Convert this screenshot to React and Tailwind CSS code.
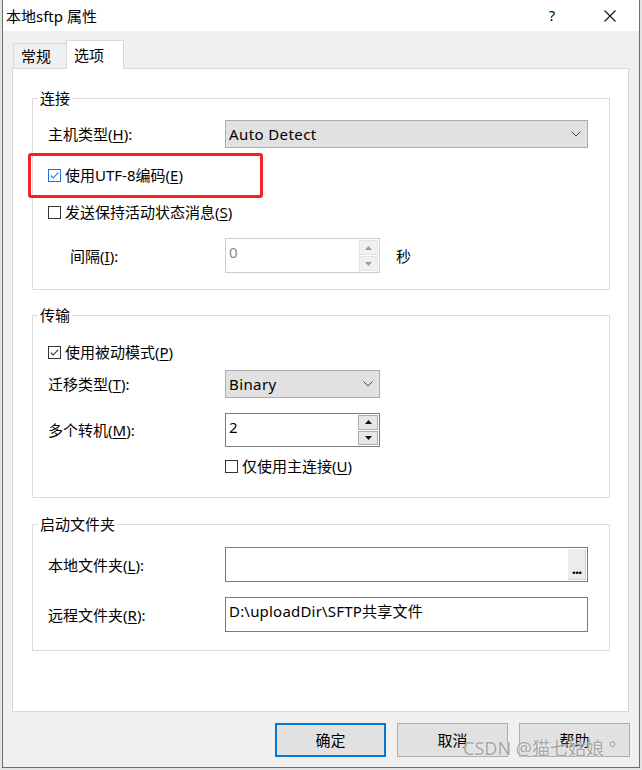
import React from "react";

const FONT = "font-['Noto_Sans','Noto_Sans_CJK_SC',sans-serif]";

function CheckBox({ checked, blue }) {
  const c = blue ? "#1a73d0" : "#333333";
  return (
    <svg width="13" height="13" viewBox="0 0 13 13" className="shrink-0">
      <rect x="0.5" y="0.5" width="12" height="12" fill="white" stroke={c} />
      {checked && (
        <path d="M2.8 6.6 L5.2 9 L10.2 3.6" fill="none" stroke={c} strokeWidth="1.1" />
      )}
    </svg>
  );
}

function Chevron() {
  return (
    <svg width="10" height="6" viewBox="0 0 10 6">
      <path d="M0.5 0.5 L5 5 L9.5 0.5" fill="none" stroke="#444" strokeWidth="1" />
    </svg>
  );
}

function Arrow({ up, color }) {
  return (
    <svg width="7" height="4" viewBox="0 0 7 4">
      <path d={up ? "M0 4 L3.5 0 L7 4 Z" : "M0 0 L3.5 4 L7 0 Z"} fill={color} />
    </svg>
  );
}

function Mn({ children, k, after = "" }) {
  return (
    <span>
      {children}(<span className="underline underline-offset-2">{k}</span>){after}
    </span>
  );
}

function Group({ title, children, className = "" }) {
  return (
    <div className={`relative border border-[#dcdcdc] w-[578px] ${className}`}>
      <span className="absolute left-[5px] top-[-11px] bg-white px-[2px] leading-[20px]">
        {title}
      </span>
      {children}
    </div>
  );
}

function Select({ value, width }) {
  return (
    <div
      className={`flex items-center justify-between h-[28px] ${width} bg-[#e1e1e1] border border-[#adadad] pl-[3px] pr-[6px]`}
    >
      <span className="leading-[20px] tracking-[0.4px]">{value}</span>
      <Chevron />
    </div>
  );
}

export default function App() {
  return (
    <div className={`relative w-[642px] h-[770px] bg-[#e4e4e4] overflow-hidden text-[15px] text-black ${FONT}`}>
      <div className="ml-[2px] w-[638px] h-[768px] bg-[#f0f0f0] border-x border-b border-[#6e6e6e] flex flex-col">
        {/* title bar */}
        <div className="h-[31px] bg-white flex items-center shrink-0">
          <span className="flex-1 pl-[3px] leading-[20px]">本地sftp 属性</span>
          <div className="w-[58px] h-full flex items-center justify-center text-[14px]">?</div>
          <div className="w-[58px] h-full flex items-center justify-center">
            <svg width="12" height="12" viewBox="0 0 12 12">
              <path d="M0.5 0.5 L11.5 11.5 M11.5 0.5 L0.5 11.5" stroke="#111" strokeWidth="1.1" />
            </svg>
          </div>
        </div>

        {/* tabs */}
        <div className="ml-[9px] mt-[9px] flex items-end h-[28px] relative z-10">
          <div className="ml-[1px] w-[53px] h-[25px] border-t border-l border-[#d9d9d9] bg-[#f0f0f0] pl-[7px] flex items-center">
            <span className="leading-[20px]">常规</span>
          </div>
          <div className="w-[58px] h-[29px] -mb-px border-t border-x border-[#d9d9d9] bg-white pl-[7px] flex items-center">
            <span className="leading-[20px]">选项</span>
          </div>
        </div>

        {/* panel */}
        <div className="ml-[9px] w-[617px] h-[644px] bg-white border border-[#d9d9d9] pl-[19px] pt-[29px]">
          <Group title="连接">
            <div className="pl-[15px] pt-[21px] pb-[16px]">
              <div className="flex items-center h-[28px]">
                <span className="w-[177px] leading-[20px]"><Mn k="H" after=":">主机类型</Mn></span>
                <Select value="Auto Detect" width="w-[363px]" />
              </div>
              <div className="flex items-center h-[20px] mt-[17px] gap-[4px]">
                <CheckBox checked blue />
                <span className="leading-[20px]"><Mn k="E">使用UTF-8编码</Mn></span>
              </div>
              <div className="flex items-center h-[20px] mt-[17px] gap-[4px]">
                <CheckBox />
                <span className="leading-[20px]"><Mn k="S">发送保持活动状态消息</Mn></span>
              </div>
              <div className="flex items-center h-[35px] mt-[16px]">
                <span className="w-[177px] pl-[22px] leading-[20px]"><Mn k="I" after=":">间隔</Mn></span>
                <div className="flex h-[35px] w-[155px] border border-[#cccccc] bg-white">
                  <span className="flex-1 pl-[3px] pt-[3px] leading-[20px] text-[#8a8a8a]">0</span>
                  <div className="w-[20px] flex flex-col gap-[1px] py-[1px] pr-[1px]">
                    <div className="flex-1 bg-[#f0f0f0] border border-[#e3e3e3] flex items-center justify-center">
                      <Arrow up color="#9a9a9a" />
                    </div>
                    <div className="flex-1 bg-[#f0f0f0] border border-[#e3e3e3] flex items-center justify-center">
                      <Arrow color="#9a9a9a" />
                    </div>
                  </div>
                </div>
                <span className="ml-[16px] leading-[20px]">秒</span>
              </div>
            </div>
            <div className="absolute left-[-5px] top-[54px] w-[235px] h-[45px] border-[3px] border-[#f42222] rounded-[3px]" />
          </Group>

          <Group title="传输" className="mt-[25px]">
            <div className="pl-[15px] pt-[26px] pb-[21px]">
              <div className="flex items-center h-[20px] gap-[4px]">
                <CheckBox checked />
                <span className="leading-[20px]"><Mn k="P">使用被动模式</Mn></span>
              </div>
              <div className="flex items-center h-[28px] mt-[8px]">
                <span className="w-[177px] leading-[20px]"><Mn k="T" after=":">迁移类型</Mn></span>
                <Select value="Binary" width="w-[155px]" />
              </div>
              <div className="flex items-center h-[34px] mt-[15px]">
                <span className="w-[177px] leading-[20px]"><Mn k="M" after=":">多个转机</Mn></span>
                <div className="flex h-[34px] w-[155px] border border-[#7a7a7a] bg-white">
                  <span className="flex-1 pl-[3px] pt-[3px] leading-[20px]">2</span>
                  <div className="w-[21px] flex flex-col gap-[1px] py-[1px] pr-[1px]">
                    <div className="flex-1 bg-[#e6e6e6] border border-[#adadad] flex items-center justify-center">
                      <Arrow up color="#111" />
                    </div>
                    <div className="flex-1 bg-[#e6e6e6] border border-[#adadad] flex items-center justify-center">
                      <Arrow color="#111" />
                    </div>
                  </div>
                </div>
              </div>
              <div className="flex items-center h-[20px] mt-[9px] ml-[177px] gap-[4px]">
                <CheckBox />
                <span className="leading-[20px]"><Mn k="U">仅使用主连接</Mn></span>
              </div>
            </div>
          </Group>

          <Group title="启动文件夹" className="mt-[26px]">
            <div className="pl-[15px] pt-[22px] pb-[18px]">
              <div className="flex items-center h-[35px]">
                <span className="w-[177px] leading-[20px]"><Mn k="L" after=":">本地文件夹</Mn></span>
                <div className="flex h-[35px] w-[363px] border border-[#7a7a7a] bg-white">
                  <span className="flex-1" />
                  <div className="w-[18px] my-[1px] mr-[1px] bg-[#ececec] border-r border-b border-[#d0d0d0] flex items-end justify-center pb-[4px]">
                    <span className="text-[15px] font-bold leading-[14px] tracking-[-1px]">...</span>
                  </div>
                </div>
              </div>
              <div className="flex items-center h-[35px] mt-[15px]">
                <span className="w-[177px] leading-[20px]"><Mn k="R" after=":">远程文件夹</Mn></span>
                <div className="flex h-[35px] w-[363px] border border-[#7a7a7a] bg-white">
                  <span className="pl-[3px] pt-[3px] leading-[20px] tracking-[0.2px]">D:\uploadDir\SFTP共享文件</span>
                </div>
              </div>
            </div>
          </Group>
        </div>

        {/* buttons */}
        <div className="flex justify-end gap-[11px] pr-[9px] mt-[11px]">
          <div className="w-[111px] h-[34px] border-2 border-[#0078d7] bg-[#e1e1e1] flex items-center justify-center">
            <span className="leading-[20px]">确定</span>
          </div>
          <div className="w-[111px] h-[34px] border border-[#adadad] bg-[#e1e1e1] flex items-center justify-center">
            <span className="leading-[20px]">取消</span>
          </div>
          <div className="w-[111px] h-[34px] border border-[#adadad] bg-[#e1e1e1] flex items-center justify-center">
            <span className="leading-[20px]">帮助</span>
          </div>
        </div>
      </div>

      {/* watermark */}
      <span className="absolute left-[463px] top-[737px] text-[18px] leading-[22px] text-[#a6a6a6] [text-shadow:0_0_2px_#ffffff]">
        CSDN @猫七姑娘 °
      </span>
    </div>
  );
}
